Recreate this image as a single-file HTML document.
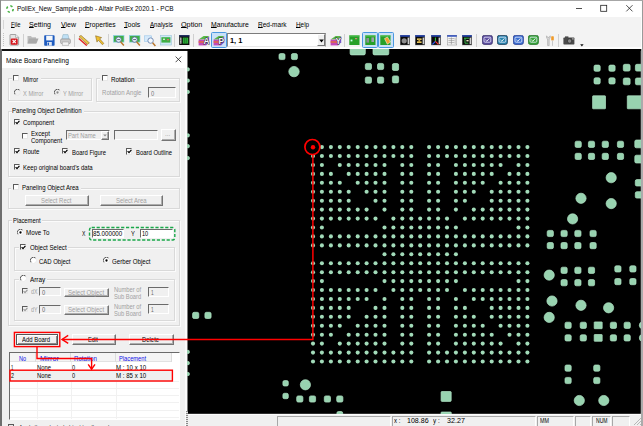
<!DOCTYPE html><html><head><meta charset="utf-8"><title>PollEx PCB</title><style>html,body{margin:0;padding:0}body{width:643px;height:426px;overflow:hidden;position:relative;background:#f0f0f0;font-family:"Liberation Sans",sans-serif;font-size:7.4px;-webkit-text-size-adjust:none}#w{position:absolute;left:0;top:0;width:643px;height:426px;overflow:hidden}#w div,#w svg,#w span{position:absolute;display:block}#w span.t{white-space:pre;line-height:1;transform-origin:0 50%}#w span.t u{position:static;display:inline;text-decoration-thickness:.55px;text-underline-offset:.2px}</style></head><body><div id="w">
<div style="left:0.0px;top:49.4px;width:187.4px;height:376.6px;background:#f0f0f0"></div>
<div style="left:0.0px;top:49.2px;width:643.0px;height:1.9px;background:#111"></div>
<div style="left:1.6px;top:51.1px;width:185.0px;height:17.2px;background:#fff"></div>
<span class="t" style="left:6.2px;top:57.05px;font-size:7.6px;color:#000;transform:scaleX(0.8649);">Make Board Paneling</span>
<svg style="left:174.6px;top:56.2px" width="7" height="7" viewBox="0 0 7 7"><path d="M.6 .6l5.6 5.6M6.2 .6L.6 6.2" stroke="#222" stroke-width=".8"/></svg>
<div style="left:185.1px;top:68.3px;width:2.3px;height:357.7px;background:#fbfbfb"></div>
<div style="left:0.0px;top:49.4px;width:1.6px;height:376.6px;background:#6e6e6e"></div>
<div style="left:8.1px;top:78.1px;width:83.8px;height:23.4px;border:1px solid #d9d9d9;box-shadow:inset 1px 1px 0 #fbfbfb, 1px 1px 0 #fbfbfb;box-sizing:border-box"></div>
<div style="left:11.5px;top:74.0px;width:29.0px;height:9.0px;background:#f0f0f0"></div>
<div style="left:13.2px;top:75.3px;width:6.2px;height:6.2px;background:#fff;border:1px solid #e8e8e8;border-top-color:#5a5a5a;border-left-color:#5a5a5a;box-sizing:border-box"></div>
<span class="t" style="left:23.0px;top:75.75px;font-size:7.4px;color:#000;transform:scaleX(0.7877);">Mirror</span>
<svg style="left:14.1px;top:88.6px" width="7" height="7" viewBox="0 0 7 7"><circle cx="3.5" cy="3.5" r="3.1" fill="#f0f0f0"/><path d="M1.2 5.5A3.1 3.1 0 0 1 5.7 1.2" stroke="#585858" stroke-width="1" fill="none"/><path d="M5.7 1.2A3.1 3.1 0 0 1 1.2 5.5" stroke="#e8e8e8" stroke-width=".9" fill="none"/></svg>
<span class="t" style="left:23.3px;top:89.75px;font-size:7.4px;color:#a0a0a0;transform:scaleX(0.7724);">X Mirror</span>
<svg style="left:54.1px;top:88.6px" width="7" height="7" viewBox="0 0 7 7"><circle cx="3.5" cy="3.5" r="3.1" fill="#f0f0f0"/><path d="M1.2 5.5A3.1 3.1 0 0 1 5.7 1.2" stroke="#585858" stroke-width="1" fill="none"/><path d="M5.7 1.2A3.1 3.1 0 0 1 1.2 5.5" stroke="#e8e8e8" stroke-width=".9" fill="none"/><circle cx="3.5" cy="3.5" r="1.15" fill="#8a8a8a"/></svg>
<span class="t" style="left:63.4px;top:89.75px;font-size:7.4px;color:#a0a0a0;transform:scaleX(0.7723);">Y Mirror</span>
<div style="left:96.2px;top:78.1px;width:83.8px;height:23.6px;border:1px solid #d9d9d9;box-shadow:inset 1px 1px 0 #fbfbfb, 1px 1px 0 #fbfbfb;box-sizing:border-box"></div>
<div style="left:100.0px;top:74.0px;width:37.0px;height:9.0px;background:#f0f0f0"></div>
<div style="left:101.5px;top:75.3px;width:6.2px;height:6.2px;background:#fff;border:1px solid #e8e8e8;border-top-color:#5a5a5a;border-left-color:#5a5a5a;box-sizing:border-box"></div>
<span class="t" style="left:110.5px;top:75.95px;font-size:7.4px;color:#000;transform:scaleX(0.8536);">Rotation</span>
<span class="t" style="left:102.1px;top:89.45px;font-size:7.4px;color:#a0a0a0;transform:scaleX(0.8216);">Rotation Angle</span>
<div style="left:148.3px;top:87.2px;width:28.0px;height:10.4px;background:#f0f0f0;border:1px solid #fff;border-top-color:#6a6a6a;border-left-color:#6a6a6a;box-sizing:border-box"></div>
<span class="t" style="left:151.0px;top:89.55px;font-size:7.4px;color:#7a7a7a;transform:scaleX(0.7758);">0</span>
<div style="left:8.1px;top:110.5px;width:172.2px;height:66.0px;border:1px solid #d9d9d9;box-shadow:inset 1px 1px 0 #fbfbfb, 1px 1px 0 #fbfbfb;box-sizing:border-box"></div>
<div style="left:11.5px;top:106.5px;width:72.5px;height:8.5px;background:#f0f0f0"></div>
<span class="t" style="left:12.4px;top:106.85px;font-size:7.4px;color:#000;transform:scaleX(0.8184);">Paneling Object Definition</span>
<div style="left:13.7px;top:118.8px;width:6.2px;height:6.2px;background:#fff;border:1px solid #e8e8e8;border-top-color:#5a5a5a;border-left-color:#5a5a5a;box-sizing:border-box"></div>
<svg style="left:14.7px;top:119.7px" width="5" height="5" viewBox="0 0 5 5"><path d="M.6 2.2l1.4 1.5L4.4 .8" stroke="#000" stroke-width="1.15" fill="none"/></svg>
<span class="t" style="left:23.3px;top:119.25px;font-size:7.4px;color:#000;transform:scaleX(0.8137);">Component</span>
<div style="left:21.7px;top:133.0px;width:6.2px;height:6.2px;background:#fff;border:1px solid #e8e8e8;border-top-color:#5a5a5a;border-left-color:#5a5a5a;box-sizing:border-box"></div>
<span class="t" style="left:31.1px;top:129.95px;font-size:7.4px;color:#000;transform:scaleX(0.8359);">Except</span>
<span class="t" style="left:31.1px;top:137.05px;font-size:7.4px;color:#000;transform:scaleX(0.8137);">Component</span>
<div style="left:66.1px;top:130.3px;width:43.8px;height:9.8px;background:#f0f0f0;border:1px solid #fff;border-top-color:#6a6a6a;border-left-color:#6a6a6a;box-sizing:border-box"></div>
<span class="t" style="left:67.9px;top:132.25px;font-size:7.4px;color:#a0a0a0;transform:scaleX(0.7841);">Part Name</span>
<div style="left:100.6px;top:131.0px;width:8.8px;height:8.6px;background:#f0f0f0;border:1px solid #fff;border-right-color:#747474;border-bottom-color:#747474;box-shadow:inset -1px -1px 0 #adadad;box-sizing:border-box"></div>
<svg style="left:103px;top:134px" width="4" height="3" viewBox="0 0 4 3"><path d="M.2 .4h3.6l-1.8 2.2z" fill="#8a8a8a"/></svg>
<div style="left:114.1px;top:130.3px;width:43.6px;height:9.5px;background:#f0f0f0;border:1px solid #fff;border-top-color:#6a6a6a;border-left-color:#6a6a6a;box-sizing:border-box"></div>
<div style="left:160.8px;top:128.8px;width:14.8px;height:12.5px;background:#f0f0f0;border:1px solid #fff;border-right-color:#747474;border-bottom-color:#747474;box-shadow:inset -1px -1px 0 #adadad;box-sizing:border-box"></div>
<span class="t" style="left:165.4px;top:130.15px;font-size:7.4px;color:#a0a0a0;transform:scaleX(0.8425);">...</span>
<div style="left:13.7px;top:148.2px;width:6.2px;height:6.2px;background:#fff;border:1px solid #e8e8e8;border-top-color:#5a5a5a;border-left-color:#5a5a5a;box-sizing:border-box"></div>
<svg style="left:14.7px;top:149.1px" width="5" height="5" viewBox="0 0 5 5"><path d="M.6 2.2l1.4 1.5L4.4 .8" stroke="#000" stroke-width="1.15" fill="none"/></svg>
<span class="t" style="left:23.3px;top:148.35px;font-size:7.4px;color:#000;transform:scaleX(0.8310);">Route</span>
<div style="left:62.2px;top:148.2px;width:6.2px;height:6.2px;background:#fff;border:1px solid #e8e8e8;border-top-color:#5a5a5a;border-left-color:#5a5a5a;box-sizing:border-box"></div>
<svg style="left:63.2px;top:149.1px" width="5" height="5" viewBox="0 0 5 5"><path d="M.6 2.2l1.4 1.5L4.4 .8" stroke="#000" stroke-width="1.15" fill="none"/></svg>
<span class="t" style="left:71.5px;top:148.55px;font-size:7.4px;color:#000;transform:scaleX(0.7980);">Board Figure</span>
<div style="left:126.2px;top:148.4px;width:6.2px;height:6.2px;background:#fff;border:1px solid #e8e8e8;border-top-color:#5a5a5a;border-left-color:#5a5a5a;box-sizing:border-box"></div>
<svg style="left:127.2px;top:149.3px" width="5" height="5" viewBox="0 0 5 5"><path d="M.6 2.2l1.4 1.5L4.4 .8" stroke="#000" stroke-width="1.15" fill="none"/></svg>
<span class="t" style="left:135.9px;top:148.75px;font-size:7.4px;color:#000;transform:scaleX(0.7986);">Board Outline</span>
<div style="left:13.7px;top:163.7px;width:6.2px;height:6.2px;background:#fff;border:1px solid #e8e8e8;border-top-color:#5a5a5a;border-left-color:#5a5a5a;box-sizing:border-box"></div>
<svg style="left:14.7px;top:164.6px" width="5" height="5" viewBox="0 0 5 5"><path d="M.6 2.2l1.4 1.5L4.4 .8" stroke="#000" stroke-width="1.15" fill="none"/></svg>
<span class="t" style="left:23.3px;top:164.05px;font-size:7.4px;color:#000;transform:scaleX(0.8137);">Keep original board's data</span>
<div style="left:8.1px;top:187.5px;width:172.2px;height:21.7px;border:1px solid #d9d9d9;box-shadow:inset 1px 1px 0 #fbfbfb, 1px 1px 0 #fbfbfb;box-sizing:border-box"></div>
<div style="left:11.0px;top:183.5px;width:69.5px;height:8.5px;background:#f0f0f0"></div>
<div style="left:12.6px;top:184.1px;width:6.2px;height:6.2px;background:#fff;border:1px solid #e8e8e8;border-top-color:#5a5a5a;border-left-color:#5a5a5a;box-sizing:border-box"></div>
<span class="t" style="left:21.8px;top:184.45px;font-size:7.4px;color:#000;transform:scaleX(0.8166);">Paneling Object Area</span>
<div style="left:24.9px;top:194.8px;width:64.1px;height:11.3px;background:#f0f0f0;border:1px solid #fff;border-right-color:#747474;border-bottom-color:#747474;box-shadow:inset -1px -1px 0 #adadad;box-sizing:border-box"></div>
<span class="t" style="left:41.2px;top:196.95px;font-size:7.4px;color:#a0a0a0;transform:scaleX(0.8017);">Select Rect</span>
<div style="left:99.6px;top:194.8px;width:63.9px;height:11.3px;background:#f0f0f0;border:1px solid #fff;border-right-color:#747474;border-bottom-color:#747474;box-shadow:inset -1px -1px 0 #adadad;box-sizing:border-box"></div>
<span class="t" style="left:115.7px;top:196.95px;font-size:7.4px;color:#a0a0a0;transform:scaleX(0.8093);">Select Area</span>
<div style="left:8.1px;top:220.2px;width:172.2px;height:105.5px;border:1px solid #d9d9d9;box-shadow:inset 1px 1px 0 #fbfbfb, 1px 1px 0 #fbfbfb;box-sizing:border-box"></div>
<div style="left:11.5px;top:216.5px;width:30.5px;height:8.5px;background:#f0f0f0"></div>
<span class="t" style="left:12.8px;top:217.35px;font-size:7.4px;color:#000;transform:scaleX(0.7903);">Placement</span>
<svg style="left:17.0px;top:228.8px" width="7" height="7" viewBox="0 0 7 7"><circle cx="3.5" cy="3.5" r="3.1" fill="#fff"/><path d="M1.2 5.5A3.1 3.1 0 0 1 5.7 1.2" stroke="#585858" stroke-width="1" fill="none"/><path d="M5.7 1.2A3.1 3.1 0 0 1 1.2 5.5" stroke="#e8e8e8" stroke-width=".9" fill="none"/><circle cx="3.5" cy="3.5" r="1.15" fill="#000"/></svg>
<span class="t" style="left:26.1px;top:229.35px;font-size:7.4px;color:#000;transform:scaleX(0.8418);">Move To</span>
<span class="t" style="left:82.4px;top:230.15px;font-size:7.4px;color:#000;transform:scaleX(0.6886);">X</span>
<span class="t" style="left:131.2px;top:230.15px;font-size:7.4px;color:#000;transform:scaleX(0.7899);">Y</span>
<div style="left:92.0px;top:229.1px;width:31.5px;height:9.1px;background:#fff;border:1px solid #fff;border-top-color:#6a6a6a;border-left-color:#6a6a6a;box-sizing:border-box"></div>
<span class="t" style="left:93.0px;top:230.35px;font-size:7.4px;color:#000;transform:scaleX(0.8358);">85.000000</span>
<div style="left:139.5px;top:229.1px;width:33.7px;height:9.1px;background:#fff;border:1px solid #fff;border-top-color:#6a6a6a;border-left-color:#6a6a6a;box-sizing:border-box"></div>
<span class="t" style="left:142.1px;top:230.35px;font-size:7.4px;color:#000;transform:scaleX(0.7529);">10</span>
<svg style="left:88px;top:226px" width="89" height="16" viewBox="88 226 89 16"><rect x="89.5" y="227.5" width="85.3" height="12.5" rx="2.2" fill="none" stroke="#1aa84a" stroke-width="1.4" stroke-dasharray="3.2 1.7"/></svg>
<div style="left:13.7px;top:246.8px;width:161.2px;height:24.1px;border:1px solid #d9d9d9;box-shadow:inset 1px 1px 0 #fbfbfb, 1px 1px 0 #fbfbfb;box-sizing:border-box"></div>
<div style="left:18.5px;top:242.8px;width:49.5px;height:8.7px;background:#f0f0f0"></div>
<div style="left:20.1px;top:243.8px;width:6.2px;height:6.2px;background:#fff;border:1px solid #e8e8e8;border-top-color:#5a5a5a;border-left-color:#5a5a5a;box-sizing:border-box"></div>
<svg style="left:21.1px;top:244.7px" width="5" height="5" viewBox="0 0 5 5"><path d="M.6 2.2l1.4 1.5L4.4 .8" stroke="#000" stroke-width="1.15" fill="none"/></svg>
<span class="t" style="left:29.5px;top:244.05px;font-size:7.4px;color:#000;transform:scaleX(0.8324);">Object Select</span>
<svg style="left:29.5px;top:256.8px" width="7" height="7" viewBox="0 0 7 7"><circle cx="3.5" cy="3.5" r="3.1" fill="#fff"/><path d="M1.2 5.5A3.1 3.1 0 0 1 5.7 1.2" stroke="#585858" stroke-width="1" fill="none"/><path d="M5.7 1.2A3.1 3.1 0 0 1 1.2 5.5" stroke="#e8e8e8" stroke-width=".9" fill="none"/></svg>
<span class="t" style="left:38.9px;top:258.05px;font-size:7.4px;color:#000;transform:scaleX(0.8045);">CAD Object</span>
<svg style="left:103.1px;top:256.8px" width="7" height="7" viewBox="0 0 7 7"><circle cx="3.5" cy="3.5" r="3.1" fill="#fff"/><path d="M1.2 5.5A3.1 3.1 0 0 1 5.7 1.2" stroke="#585858" stroke-width="1" fill="none"/><path d="M5.7 1.2A3.1 3.1 0 0 1 1.2 5.5" stroke="#e8e8e8" stroke-width=".9" fill="none"/><circle cx="3.5" cy="3.5" r="1.15" fill="#000"/></svg>
<span class="t" style="left:112.2px;top:258.05px;font-size:7.4px;color:#000;transform:scaleX(0.8294);">Gerber Object</span>
<div style="left:13.7px;top:278.7px;width:161.2px;height:42.7px;border:1px solid #d9d9d9;box-shadow:inset 1px 1px 0 #fbfbfb, 1px 1px 0 #fbfbfb;box-sizing:border-box"></div>
<div style="left:18.5px;top:274.5px;width:28.5px;height:9.0px;background:#f0f0f0"></div>
<svg style="left:20.4px;top:274.5px" width="7" height="7" viewBox="0 0 7 7"><circle cx="3.5" cy="3.5" r="3.1" fill="#fff"/><path d="M1.2 5.5A3.1 3.1 0 0 1 5.7 1.2" stroke="#585858" stroke-width="1" fill="none"/><path d="M5.7 1.2A3.1 3.1 0 0 1 1.2 5.5" stroke="#e8e8e8" stroke-width=".9" fill="none"/></svg>
<span class="t" style="left:29.9px;top:275.75px;font-size:7.4px;color:#000;transform:scaleX(0.8601);">Array</span>
<div style="left:21.5px;top:287.6px;width:6.2px;height:6.2px;background:#f0f0f0;border:1px solid #e8e8e8;border-top-color:#5a5a5a;border-left-color:#5a5a5a;box-sizing:border-box"></div>
<svg style="left:22.5px;top:288.5px" width="5" height="5" viewBox="0 0 5 5"><path d="M.6 2.2l1.4 1.5L4.4 .8" stroke="#9a9a9a" stroke-width="1.15" fill="none"/></svg>
<span class="t" style="left:31.1px;top:288.35px;font-size:7.4px;color:#a0a0a0;transform:scaleX(0.7185);">dX</span>
<div style="left:38.9px;top:286.7px;width:21.9px;height:9.8px;background:#f0f0f0;border:1px solid #fff;border-top-color:#6a6a6a;border-left-color:#6a6a6a;box-sizing:border-box"></div>
<span class="t" style="left:41.5px;top:288.55px;font-size:7.4px;color:#6a6a6a;transform:scaleX(0.7758);">0</span>
<div style="left:64.1px;top:287.6px;width:44.7px;height:9.8px;background:#f0f0f0;border:1px solid #fff;border-right-color:#747474;border-bottom-color:#747474;box-shadow:inset -1px -1px 0 #adadad;box-sizing:border-box"></div>
<span class="t" style="left:67.9px;top:288.65px;font-size:7.4px;color:#a0a0a0;transform:scaleX(0.8210);">Select Object</span>
<span class="t" style="left:114.1px;top:285.85px;font-size:7.4px;color:#a0a0a0;transform:scaleX(0.7880);">Number of</span>
<span class="t" style="left:114.1px;top:292.85px;font-size:7.4px;color:#a0a0a0;transform:scaleX(0.7785);">Sub Board</span>
<div style="left:148.3px;top:287.2px;width:20.3px;height:9.8px;background:#f0f0f0;border:1px solid #fff;border-top-color:#6a6a6a;border-left-color:#6a6a6a;box-sizing:border-box"></div>
<span class="t" style="left:151.3px;top:288.95px;font-size:7.4px;color:#6a6a6a;transform:scaleX(0.6545);">1</span>
<div style="left:21.5px;top:305.8px;width:6.2px;height:6.2px;background:#f0f0f0;border:1px solid #e8e8e8;border-top-color:#5a5a5a;border-left-color:#5a5a5a;box-sizing:border-box"></div>
<svg style="left:22.5px;top:306.7px" width="5" height="5" viewBox="0 0 5 5"><path d="M.6 2.2l1.4 1.5L4.4 .8" stroke="#9a9a9a" stroke-width="1.15" fill="none"/></svg>
<span class="t" style="left:31.1px;top:306.15px;font-size:7.4px;color:#a0a0a0;transform:scaleX(0.7185);">dY</span>
<div style="left:38.9px;top:304.5px;width:21.9px;height:9.8px;background:#f0f0f0;border:1px solid #fff;border-top-color:#6a6a6a;border-left-color:#6a6a6a;box-sizing:border-box"></div>
<span class="t" style="left:41.5px;top:306.35px;font-size:7.4px;color:#6a6a6a;transform:scaleX(0.7758);">0</span>
<div style="left:64.1px;top:305.4px;width:44.7px;height:9.8px;background:#f0f0f0;border:1px solid #fff;border-right-color:#747474;border-bottom-color:#747474;box-shadow:inset -1px -1px 0 #adadad;box-sizing:border-box"></div>
<span class="t" style="left:67.9px;top:306.45px;font-size:7.4px;color:#a0a0a0;transform:scaleX(0.8210);">Select Object</span>
<span class="t" style="left:114.1px;top:303.05px;font-size:7.4px;color:#a0a0a0;transform:scaleX(0.7880);">Number of</span>
<span class="t" style="left:114.1px;top:310.05px;font-size:7.4px;color:#a0a0a0;transform:scaleX(0.7785);">Sub Board</span>
<div style="left:148.3px;top:304.4px;width:20.3px;height:9.5px;background:#f0f0f0;border:1px solid #fff;border-top-color:#6a6a6a;border-left-color:#6a6a6a;box-sizing:border-box"></div>
<span class="t" style="left:151.3px;top:305.95px;font-size:7.4px;color:#6a6a6a;transform:scaleX(0.6545);">1</span>
<div style="left:15.6px;top:333.7px;width:42.3px;height:10.9px;background:#f0f0f0;border:1px solid #555;box-shadow:inset 1px 1px 0 #fff, inset -1px -1px 0 #8a8a8a;box-sizing:border-box"></div>
<span class="t" style="left:22.1px;top:335.95px;font-size:7.4px;color:#000;transform:scaleX(0.8014);">Add Board</span>
<div style="left:71.9px;top:333.7px;width:44.5px;height:10.9px;background:#f0f0f0;border:1px solid #fff;border-right-color:#747474;border-bottom-color:#747474;box-shadow:inset -1px -1px 0 #adadad;box-sizing:border-box"></div>
<span class="t" style="left:88.3px;top:335.95px;font-size:7.4px;color:#000;transform:scaleX(0.7686);">Edit</span>
<div style="left:128.6px;top:333.7px;width:45.4px;height:10.9px;background:#f0f0f0;border:1px solid #fff;border-right-color:#747474;border-bottom-color:#747474;box-shadow:inset -1px -1px 0 #adadad;box-sizing:border-box"></div>
<span class="t" style="left:142.1px;top:335.95px;font-size:7.4px;color:#000;transform:scaleX(0.8000);">Delete</span>
<div style="left:8.6px;top:352.3px;width:171.4px;height:67.3px;background:#fff;border:1px solid #fff;border-top-color:#6a6a6a;border-left-color:#6a6a6a;box-sizing:border-box"></div>
<div style="left:9.6px;top:353.3px;width:162.0px;height:8.4px;background:#f4f4f4;border-bottom:1px solid #e2e2e2;box-sizing:border-box"></div>
<div style="left:35.4px;top:353.3px;width:0.8px;height:8.4px;background:#dcdcdc"></div>
<div style="left:70.1px;top:353.3px;width:0.8px;height:8.4px;background:#dcdcdc"></div>
<div style="left:115.3px;top:353.3px;width:0.8px;height:8.4px;background:#dcdcdc"></div>
<div style="left:171.2px;top:353.3px;width:0.8px;height:8.4px;background:#dcdcdc"></div>
<div style="left:36.9px;top:362.0px;width:0.8px;height:56.6px;background:#f1f1f1"></div>
<div style="left:71.1px;top:362.0px;width:0.8px;height:56.6px;background:#f1f1f1"></div>
<div style="left:115.8px;top:362.0px;width:0.8px;height:56.6px;background:#f1f1f1"></div>
<div style="left:9.6px;top:380.6px;width:169.4px;height:0.8px;background:#f1f1f1"></div>
<div style="left:9.6px;top:387.8px;width:169.4px;height:0.8px;background:#f1f1f1"></div>
<div style="left:9.6px;top:395.0px;width:169.4px;height:0.8px;background:#f1f1f1"></div>
<div style="left:9.6px;top:402.2px;width:169.4px;height:0.8px;background:#f1f1f1"></div>
<div style="left:9.6px;top:409.5px;width:169.4px;height:0.8px;background:#f1f1f1"></div>
<div style="left:9.6px;top:416.7px;width:169.4px;height:0.8px;background:#f1f1f1"></div>
<div style="left:9.6px;top:370.3px;width:162.0px;height:10.7px;background:#efefef"></div>
<span class="t" style="left:19.0px;top:354.95px;font-size:7.4px;color:#1010e8;transform:scaleX(0.7511);">No</span>
<span class="t" style="left:40.1px;top:354.95px;font-size:7.4px;color:#1010e8;transform:scaleX(0.9794);">Mirror</span>
<span class="t" style="left:73.9px;top:354.95px;font-size:7.4px;color:#1010e8;transform:scaleX(0.8281);">Rotation</span>
<span class="t" style="left:119.2px;top:354.95px;font-size:7.4px;color:#1010e8;transform:scaleX(0.7760);">Placement</span>
<span class="t" style="left:10.9px;top:364.25px;font-size:7.4px;color:#000;transform:scaleX(0.5576);">1</span>
<span class="t" style="left:37.3px;top:364.25px;font-size:7.4px;color:#000;transform:scaleX(0.7922);">None</span>
<span class="t" style="left:71.5px;top:364.25px;font-size:7.4px;color:#000;transform:scaleX(0.7515);">0</span>
<span class="t" style="left:116.1px;top:364.25px;font-size:7.4px;color:#000;transform:scaleX(0.8260);">M : 10 x 10</span>
<span class="t" style="left:10.6px;top:372.25px;font-size:7.4px;color:#000;transform:scaleX(0.7273);">2</span>
<span class="t" style="left:37.3px;top:372.25px;font-size:7.4px;color:#000;transform:scaleX(0.7922);">None</span>
<span class="t" style="left:71.5px;top:372.25px;font-size:7.4px;color:#000;transform:scaleX(0.7515);">0</span>
<span class="t" style="left:116.1px;top:372.25px;font-size:7.4px;color:#000;transform:scaleX(0.8260);">M : 85 x 10</span>
<div style="left:8.0px;top:424.0px;width:6.2px;height:7.0px;background:#e6e6e6;border:1px solid #5a5a5a;box-sizing:border-box"></div>
<span class="t" style="left:19.0px;top:424.35px;font-size:7.4px;color:#333;transform:scaleX(0.7520);">Apply the selected object to all panels</span>
<div style="left:0.0px;top:0.0px;width:643.0px;height:17.0px;background:#fff"></div>
<svg style="left:5px;top:3.5px" width="10" height="10" viewBox="0 0 10 10"><circle cx="5" cy="5" r="3.2" fill="none" stroke="#48b044" stroke-width="1.6" stroke-dasharray="2.3 2.7"/></svg>
<span class="t" style="left:17.0px;top:4.90px;font-size:7.4px;color:#000;transform:scaleX(0.8703);">PollEx_New_Sample.pdbb - Altair PollEx 2020.1 - PCB</span>
<svg style="left:570px;top:0px" width="70" height="18" viewBox="0 0 70 18"><path d="M6 8.5h6" stroke="#222" stroke-width="0.8" fill="none"/><rect x="30.7" y="5.3" width="6" height="6" stroke="#222" stroke-width="0.8" fill="none"/><path d="M56.3 5.2l6.2 6.2M62.5 5.2l-6.2 6.2" stroke="#222" stroke-width="0.8" fill="none"/></svg>
<div style="left:0.0px;top:17.0px;width:643.0px;height:13.0px;background:#f3f3f3"></div>
<span class="t" style="left:10.5px;top:20.70px;font-size:7.4px;color:#000;transform:scaleX(0.7969);"><u>F</u>ile</span>
<span class="t" style="left:29.0px;top:20.70px;font-size:7.4px;color:#000;transform:scaleX(0.9552);"><u>S</u>etting</span>
<span class="t" style="left:60.5px;top:20.70px;font-size:7.4px;color:#000;transform:scaleX(0.9440);"><u>V</u>iew</span>
<span class="t" style="left:84.5px;top:20.70px;font-size:7.4px;color:#000;transform:scaleX(0.9079);"><u>P</u>roperties</span>
<span class="t" style="left:124.4px;top:20.70px;font-size:7.4px;color:#000;transform:scaleX(0.9441);"><u>T</u>ools</span>
<span class="t" style="left:149.5px;top:20.70px;font-size:7.4px;color:#000;transform:scaleX(0.8281);"><u>A</u>nalysis</span>
<span class="t" style="left:181.2px;top:20.70px;font-size:7.4px;color:#000;transform:scaleX(0.9779);"><u>O</u>ption</span>
<span class="t" style="left:210.9px;top:20.70px;font-size:7.4px;color:#000;transform:scaleX(0.9219);"><u>M</u>anufacture</span>
<span class="t" style="left:257.9px;top:20.70px;font-size:7.4px;color:#000;transform:scaleX(0.8813);"><u>R</u>ed-mark</span>
<span class="t" style="left:295.5px;top:20.70px;font-size:7.4px;color:#000;transform:scaleX(0.8608);"><u>H</u>elp</span>
<div style="left:0.0px;top:30.0px;width:643.0px;height:19.4px;background:#f3f3f3"></div>
<div style="left:0.0px;top:47.2px;width:643.0px;height:2.2px;background:#fdfdfd"></div>
<div style="left:3.4px;top:19.5px;width:0.8px;height:9.0px;background:#d6d6d6"></div>
<div style="left:2.5px;top:33.0px;width:1.0px;height:14.0px;background:repeating-linear-gradient(#c2c2c2 0 1px,transparent 1px 2px)"></div>
<div style="left:22.7px;top:33.5px;width:0.8px;height:13.0px;background:#d0d0d0"></div>
<div style="left:73.5px;top:33.5px;width:0.8px;height:13.0px;background:#d0d0d0"></div>
<div style="left:108.0px;top:33.5px;width:0.8px;height:13.0px;background:#d0d0d0"></div>
<div style="left:174.4px;top:33.5px;width:0.8px;height:13.0px;background:#d0d0d0"></div>
<div style="left:193.2px;top:33.5px;width:0.8px;height:13.0px;background:#d0d0d0"></div>
<div style="left:344.3px;top:33.5px;width:0.8px;height:13.0px;background:#d0d0d0"></div>
<div style="left:475.9px;top:33.5px;width:0.8px;height:13.0px;background:#d0d0d0"></div>
<div style="left:558.0px;top:33.5px;width:0.8px;height:13.0px;background:#d0d0d0"></div>
<svg style="left:9px;top:34px" width="11" height="12" viewBox="0 0 11 12"><path d="M1.6 .5h5.2l2.8 2.8v7.2q0 .6-.6.6h-7.4q-.6 0-.6-.6v-9.4q0-.6.6-.6z" fill="#e4e4e4" stroke="#8f8f8f" stroke-width=".8"/><path d="M6.6 .6v2.8h2.8" fill="#f8f8f8" stroke="#8f8f8f" stroke-width=".6"/><rect x="1.7" y="4.5" width="7" height="6.2" rx="1.2" fill="#d6181e"/><path d="M3.6 6l3.2 3.2M6.8 6L3.6 9.2" stroke="#fff" stroke-width="1.1"/></svg>
<svg style="left:27px;top:34px" width="12" height="11" viewBox="0 0 12 11"><path d="M.5 2h3.5l1 1.2h4v6.3h-8.5z" fill="#bdbdbd"/><path d="M2.2 4.6h9.3l-2 5h-9z" fill="#a9a9a9"/></svg>
<svg style="left:44px;top:34.5px" width="11" height="11" viewBox="0 0 11 11"><rect x=".2" y=".3" width="10.4" height="10.4" rx=".8" fill="#1e5bbf"/><rect x="2.2" y=".8" width="6.4" height="4.6" fill="#f4f7fb"/><rect x="3" y="7" width="4.8" height="3.7" fill="#dfe6f2"/><rect x="3.6" y="7.6" width="1.4" height="2.6" fill="#1e5bbf"/></svg>
<svg style="left:59.5px;top:34px" width="11" height="12" viewBox="0 0 11 12"><path d="M3 .6h5l1 4.4h-7z" fill="#bfe0f5" stroke="#8ab" stroke-width=".5"/><rect x=".6" y="5" width="9.8" height="4.6" rx="1.2" fill="#c9c9c9" stroke="#8c8c8c" stroke-width=".6"/><rect x="2.2" y="8" width="6.6" height="3.2" fill="#f2f2f2" stroke="#999" stroke-width=".5"/></svg>
<svg style="left:78px;top:35px" width="12" height="11" viewBox="0 0 12 11"><path d="M1 1.6l2-1.2 8.4 7.4-2 1.6z" fill="#e8c24a" stroke="#8a6a20" stroke-width=".6"/><path d="M.8 3.6l8 7" stroke="#e02020" stroke-width="1.3"/></svg>
<svg style="left:95px;top:35px" width="10" height="10" viewBox="0 0 10 10"><path d="M.6 .8l6 1.8-2 1.2 4.2 4.6-1.4 1.3-4.2-4.6-1.2 2z" fill="#f0c030" stroke="#8a6a20" stroke-width=".6"/></svg>
<svg style="left:112.5px;top:34.5px" width="12" height="12" viewBox="0 0 12 12"><rect x=".5" y=".5" width="10.5" height="6.6" fill="#3fb045" stroke="#8fd0e8" stroke-width=".7"/><circle cx="5.6" cy="4.6" r="2.7" fill="#e6f1fa" stroke="#5a6f9a" stroke-width=".9"/><path d="M7.6 6.8l3.3 3.8" stroke="#b9772e" stroke-width="1.5"/><path d="M4.2 4.6h2.8" stroke="#345" stroke-width=".8"/></svg>
<svg style="left:128.8px;top:34.5px" width="12" height="12" viewBox="0 0 12 12"><rect x=".5" y=".5" width="10.5" height="6.6" fill="#3fb045" stroke="#8fd0e8" stroke-width=".7"/><circle cx="5.6" cy="4.6" r="2.7" fill="#e6f1fa" stroke="#5a6f9a" stroke-width=".9"/><path d="M7.6 6.8l3.3 3.8" stroke="#b9772e" stroke-width="1.5"/><path d="M4.2 4.6h2.8" stroke="#345" stroke-width=".8"/></svg>
<svg style="left:144.2px;top:34.5px" width="12" height="12" viewBox="0 0 12 12"><rect x=".5" y=".8" width="7" height="5.6" fill="#d5e9fa" stroke="#9cc6ea" stroke-width=".6"/><circle cx="6.6" cy="5.6" r="2.7" fill="#f4f9fd" stroke="#6c86b0" stroke-width=".9"/><path d="M8.6 7.8l2.8 3.2" stroke="#b9772e" stroke-width="1.5"/></svg>
<svg style="left:159.5px;top:35px" width="12" height="11" viewBox="0 0 12 11"><rect x=".4" y=".4" width="11" height="9.6" fill="#cfe8f6" stroke="#9cc6da" stroke-width=".6"/><rect x="1.4" y="2.2" width="9" height="5.4" fill="#3fb045"/><rect x="3" y="3.6" width="2" height="1.4" fill="#d0e8d0"/><rect x="7" y="4" width="2" height="1.4" fill="#d87070"/></svg>
<svg style="left:179.2px;top:34.8px" width="11" height="11" viewBox="0 0 11 11"><rect x=".2" y=".2" width="10.2" height="9.8" fill="#0c0c0c"/><rect x=".2" y=".2" width="10.2" height="1.3" fill="#1f2f6a"/><rect x="3.8" y="2.6" width="5.4" height="6" fill="#2fb03a"/><path d="M5.4 2.6v6M7.2 2.6v6" stroke="#0c5a18" stroke-width=".6"/><rect x="1" y="2.6" width="1.5" height="6" fill="#d8d8d8"/><path d="M1 4h1.5M1 5.6h1.5M1 7.2h1.5" stroke="#333" stroke-width=".5"/></svg>
<svg style="left:198px;top:34.6px" width="12" height="11" viewBox="0 0 12 11"><path d="M.6 4.6l5-3.6h5.6l-3.2 3.2z" fill="#58b848"/><path d="M.6 4.6h7.4v5.8h-7.4z" fill="#c04ab8"/><path d="M.6 6.2h7.4v1.6h-7.4z" fill="#e06a4a"/><path d="M8 4.4l3.2-3.2v6l-3.2 3.2z" fill="#7a58c8"/><text x="5.4" y="9.2" font-family="Liberation Sans,sans-serif" font-size="8.4" font-weight="bold" fill="#f4f8ff" stroke="#2a2a2a" stroke-width="1" paint-order="stroke" stroke-linejoin="round">A</text></svg>
<div style="left:210.8px;top:31.8px;width:16.2px;height:15.8px;background:#cae1f8;border:1px solid #4a98e0;border-radius:1.5px;box-sizing:border-box"></div>
<svg style="left:213.2px;top:34.6px" width="12" height="11" viewBox="0 0 12 11"><path d="M.6 4.6l5-3.6h5.6l-3.2 3.2z" fill="#58b848"/><path d="M.6 4.6h7.4v5.8h-7.4z" fill="#c04ab8"/><path d="M.6 6.2h7.4v1.6h-7.4z" fill="#e06a4a"/><path d="M8 4.4l3.2-3.2v6l-3.2 3.2z" fill="#7a58c8"/><text x="5.4" y="9.2" font-family="Liberation Sans,sans-serif" font-size="8.4" font-weight="bold" fill="#f4f8ff" stroke="#2a2a2a" stroke-width="1" paint-order="stroke" stroke-linejoin="round">P</text></svg>
<div style="left:227.0px;top:33.0px;width:99.0px;height:14.2px;background:#fff;border:1px solid #a0a0a0;border-top-color:#7c7c7c;border-left-color:#8c8c8c;border-bottom-color:#e8e8e8;box-sizing:border-box"></div>
<div style="left:317.0px;top:34.2px;width:8.2px;height:12.0px;background:#f0f0f0;border:1px solid #fff;border-right-color:#777;border-bottom-color:#777;box-sizing:border-box"></div>
<svg style="left:318.6px;top:38.6px" width="5" height="4" viewBox="0 0 5 4"><path d="M.2 .6h4.6l-2.3 2.8z" fill="#000"/></svg>
<span class="t" style="left:229.5px;top:36.60px;font-size:7.4px;color:#000;font-weight:bold;transform:scaleX(0.9977);">1, 1</span>
<svg style="left:330px;top:34.6px" width="12" height="11" viewBox="0 0 12 11"><path d="M.6 4.6l5-3.6h5.6l-3.2 3.2z" fill="#58b848"/><path d="M.6 4.6h7.4v5.8h-7.4z" fill="#c04ab8"/><path d="M.6 6.2h7.4v1.6h-7.4z" fill="#e06a4a"/><path d="M8 4.4l3.2-3.2v6l-3.2 3.2z" fill="#7a58c8"/><text x="5.4" y="9.2" font-family="Liberation Sans,sans-serif" font-size="8.4" font-weight="bold" fill="#f4f8ff" stroke="#2a2a2a" stroke-width="1" paint-order="stroke" stroke-linejoin="round">Y</text></svg>
<svg style="left:349px;top:34.6px" width="11" height="11" viewBox="0 0 11 11"><rect x=".3" y=".4" width="10.2" height="9.6" fill="#26a028"/><rect x=".3" y=".4" width="10.2" height="1.1" fill="#5cc45a"/><rect x="1.6" y="4.6" width="1.8" height="1.8" fill="#cfe"/><rect x="6" y="3.2" width="2.2" height="1" fill="#e88"/></svg>
<div style="left:362.3px;top:31.8px;width:15.6px;height:15.8px;background:#cae1f8;border:1px solid #4a98e0;border-radius:1.5px;box-sizing:border-box"></div>
<div style="left:377.5px;top:31.8px;width:16.0px;height:15.8px;background:#cae1f8;border:1px solid #4a98e0;border-radius:1.5px;box-sizing:border-box"></div>
<svg style="left:364.8px;top:34.6px" width="11" height="11" viewBox="0 0 11 11"><rect x=".3" y=".4" width="10.2" height="9.6" fill="#26a028"/><rect x=".3" y=".4" width="10.2" height="1.1" fill="#5cc45a"/><rect x="1.4" y="3" width="2.6" height="4.6" fill="#8a8f95"/><rect x="6.4" y="2.4" width="2.6" height="4.6" fill="#9aa0a8"/></svg>
<svg style="left:380.3px;top:34.6px" width="11" height="11" viewBox="0 0 11 11"><rect x=".3" y=".4" width="10.2" height="9.6" fill="#26a028"/><rect x=".3" y=".4" width="10.2" height="1.1" fill="#5cc45a"/><path d="M4.5 3.6l3-1.6 3 5-3.2 2.2z" fill="#f0a030" stroke="#fff" stroke-width=".5"/></svg>
<svg style="left:399.6px;top:35.2px" width="11" height="11" viewBox="0 0 11 11"><rect x=".2" y=".2" width="9.6" height="9.8" fill="#0a0a0a" stroke="#777" stroke-width=".4"/><rect x=".2" y=".2" width="9.6" height="1.5" fill="#2646b8"/><rect x="7.6" y="2.6" width="1.6" height="6.6" fill="#cfcfcf"/><circle cx="4.2" cy="5.8" r="2.6" fill="#8d8d8d"/></svg>
<svg style="left:415.3px;top:35.2px" width="11" height="11" viewBox="0 0 11 11"><rect x=".2" y=".2" width="9.6" height="9.8" fill="#0a0a0a" stroke="#777" stroke-width=".4"/><rect x=".2" y=".2" width="9.6" height="1.5" fill="#2646b8"/><rect x="7.6" y="2.6" width="1.6" height="6.6" fill="#cfcfcf"/><rect x="2" y="3.4" width="4.6" height="1.6" fill="#e8c860"/><rect x="2" y="6.4" width="4.6" height="1.6" fill="#e8c860"/><rect x="3.4" y="4" width="1.8" height="3.4" fill="#c8a040"/></svg>
<svg style="left:430.7px;top:35.2px" width="11" height="11" viewBox="0 0 11 11"><rect x=".2" y=".2" width="9.6" height="9.8" fill="#0a0a0a" stroke="#777" stroke-width=".4"/><rect x=".2" y=".2" width="9.6" height="1.5" fill="#2646b8"/><rect x="7.6" y="2.6" width="1.6" height="6.6" fill="#cfcfcf"/><path d="M4.4 2.6v4" stroke="#30d040" stroke-width="1"/><path d="M4.4 6.4l-3 3" stroke="#3060ff" stroke-width="1.1"/><path d="M4.4 6.4l3 3" stroke="#ff3030" stroke-width="1.1"/></svg>
<svg style="left:446.5px;top:35.2px" width="11" height="11" viewBox="0 0 11 11"><rect x=".2" y=".2" width="9.6" height="9.8" fill="#f6f6f6" stroke="#777" stroke-width=".4"/><rect x=".2" y=".2" width="9.6" height="1.5" fill="#2646b8"/><rect x="7.6" y="2.6" width="1.6" height="6.6" fill="#cfcfcf"/><path d="M1.4 3.6h6M1.4 5.6h6M1.4 7.6h6M4.4 2.4v7" stroke="#888" stroke-width=".6"/></svg>
<svg style="left:462px;top:35.2px" width="11" height="11" viewBox="0 0 11 11"><rect x=".2" y=".2" width="9.6" height="9.8" fill="#0a0a0a" stroke="#777" stroke-width=".4"/><rect x=".2" y=".2" width="9.6" height="1.5" fill="#2646b8"/><rect x="7.6" y="2.6" width="1.6" height="6.6" fill="#cfcfcf"/><path d="M2 3.2h5M3 3.2v5h3.4" stroke="#40c850" stroke-width=".9" fill="none"/><rect x="4.4" y="5" width="2.2" height="1.4" fill="#e8e8c0"/></svg>
<svg style="left:482px;top:35.4px" width="11" height="10" viewBox="0 0 11 10"><rect x=".4" y=".4" width="10" height="9" rx="1.8" fill="#5e4fa0" stroke="#37306a" stroke-width=".8"/><rect x="2" y="2.2" width="6.8" height="5" rx="1" fill="none" stroke="#eef" stroke-width=".8"/><path d="M3.4 4.8l1.4 1.4 2.6-2.8" stroke="#fff" stroke-width=".9" fill="none"/></svg>
<svg style="left:497px;top:35.4px" width="11" height="10" viewBox="0 0 11 10"><rect x=".4" y=".4" width="10" height="9" rx="1.8" fill="#2a86b0" stroke="#17324f" stroke-width=".8"/><rect x="2" y="2.2" width="6.8" height="5" rx="1" fill="none" stroke="#eef" stroke-width=".8"/><path d="M3.4 4.8l1.4 1.4 2.6-2.8" stroke="#fff" stroke-width=".9" fill="none"/></svg>
<svg style="left:512.5px;top:35.4px" width="11" height="10" viewBox="0 0 11 10"><rect x=".4" y=".4" width="10" height="9" rx="1.8" fill="#3a6fd0" stroke="#273a90" stroke-width=".8"/><rect x="2" y="2.2" width="6.8" height="5" rx="1" fill="none" stroke="#eef" stroke-width=".8"/><path d="M3.4 4.8l1.4 1.4 2.6-2.8" stroke="#fff" stroke-width=".9" fill="none"/></svg>
<svg style="left:527.8px;top:35.4px" width="11" height="10" viewBox="0 0 11 10"><rect x=".4" y=".4" width="10" height="9" rx="1.8" fill="#38a63c" stroke="#236f28" stroke-width=".8"/><rect x="2" y="2.2" width="6.8" height="5" rx="1" fill="none" stroke="#eef" stroke-width=".8"/><path d="M3.4 4.8l1.4 1.4 2.6-2.8" stroke="#fff" stroke-width=".9" fill="none"/></svg>
<svg style="left:544px;top:34.5px" width="11" height="12" viewBox="0 0 11 12"><path d="M2.6 .8v2.4l1 .8v6.6h1.6v-6.6l1-.8v-2.4l-1.1 1.6h-1.4z" fill="#d4d4d4" stroke="#9a9a9a" stroke-width=".5"/><rect x="7.2" y="1.2" width="2.6" height="4.2" rx=".6" fill="#f09a28"/><rect x="8" y="5.4" width="1" height="5.4" fill="#c8c8c8"/></svg>
<svg style="left:562.5px;top:36px" width="12" height="9" viewBox="0 0 12 9"><rect x=".4" y="1.6" width="11" height="6.8" rx=".6" fill="#4a4a4a"/><rect x="2" y=".4" width="3.4" height="1.6" fill="#4a4a4a"/><circle cx="6.6" cy="5" r="2.2" fill="#8a8a8a" stroke="#222" stroke-width=".6"/><rect x="9.2" y="2.4" width="1.4" height="1" fill="#ddd"/></svg>
<svg style="left:580.2px;top:44px" width="4" height="3" viewBox="0 0 4 3"><path d="M.2 .3h3.4l-1.7 2.2z" fill="#111"/></svg>
<svg style="left:187px;top:49px" width="454" height="365" viewBox="187 49 454 365"><rect x="187.5" y="49" width="453.3" height="364.8" fill="#000"/><g fill="#a2dbb9" transform="translate(0 .4)"><circle cx="321.9" cy="146.7" r="2.05"/><circle cx="330.9" cy="146.7" r="2.05"/><circle cx="339.8" cy="146.7" r="2.05"/><circle cx="348.7" cy="146.7" r="2.05"/><circle cx="357.7" cy="146.7" r="2.05"/><circle cx="366.6" cy="146.7" r="2.05"/><circle cx="375.5" cy="146.7" r="2.05"/><circle cx="384.5" cy="146.7" r="2.05"/><circle cx="393.4" cy="146.7" r="2.05"/><circle cx="402.3" cy="146.7" r="2.05"/><circle cx="411.3" cy="146.7" r="2.05"/><circle cx="429.1" cy="146.7" r="2.05"/><circle cx="438.1" cy="146.7" r="2.05"/><circle cx="447.0" cy="146.7" r="2.05"/><circle cx="455.9" cy="146.7" r="2.05"/><circle cx="464.9" cy="146.7" r="2.05"/><circle cx="473.8" cy="146.7" r="2.05"/><circle cx="482.7" cy="146.7" r="2.05"/><circle cx="491.7" cy="146.7" r="2.05"/><circle cx="500.6" cy="146.7" r="2.05"/><circle cx="509.5" cy="146.7" r="2.05"/><circle cx="518.5" cy="146.7" r="2.05"/><circle cx="527.4" cy="146.7" r="2.05"/><circle cx="313.0" cy="155.6" r="2.05"/><circle cx="321.9" cy="155.6" r="2.05"/><circle cx="330.9" cy="155.6" r="2.05"/><circle cx="339.8" cy="155.6" r="2.05"/><circle cx="348.7" cy="155.6" r="2.05"/><circle cx="357.7" cy="155.6" r="2.05"/><circle cx="366.6" cy="155.6" r="2.05"/><circle cx="375.5" cy="155.6" r="2.05"/><circle cx="384.5" cy="155.6" r="2.05"/><circle cx="393.4" cy="155.6" r="2.05"/><circle cx="402.3" cy="155.6" r="2.05"/><circle cx="411.3" cy="155.6" r="2.05"/><circle cx="429.1" cy="155.6" r="2.05"/><circle cx="438.1" cy="155.6" r="2.05"/><circle cx="447.0" cy="155.6" r="2.05"/><circle cx="455.9" cy="155.6" r="2.05"/><circle cx="464.9" cy="155.6" r="2.05"/><circle cx="473.8" cy="155.6" r="2.05"/><circle cx="482.7" cy="155.6" r="2.05"/><circle cx="491.7" cy="155.6" r="2.05"/><circle cx="500.6" cy="155.6" r="2.05"/><circle cx="509.5" cy="155.6" r="2.05"/><circle cx="518.5" cy="155.6" r="2.05"/><circle cx="527.4" cy="155.6" r="2.05"/><circle cx="313.0" cy="164.6" r="2.05"/><circle cx="321.9" cy="164.6" r="2.05"/><circle cx="339.8" cy="164.6" r="2.05"/><circle cx="348.7" cy="164.6" r="2.05"/><circle cx="357.7" cy="164.6" r="2.05"/><circle cx="366.6" cy="164.6" r="2.05"/><circle cx="375.5" cy="164.6" r="2.05"/><circle cx="384.5" cy="164.6" r="2.05"/><circle cx="402.3" cy="164.6" r="2.05"/><circle cx="411.3" cy="164.6" r="2.05"/><circle cx="429.1" cy="164.6" r="2.05"/><circle cx="438.1" cy="164.6" r="2.05"/><circle cx="455.9" cy="164.6" r="2.05"/><circle cx="464.9" cy="164.6" r="2.05"/><circle cx="473.8" cy="164.6" r="2.05"/><circle cx="482.7" cy="164.6" r="2.05"/><circle cx="491.7" cy="164.6" r="2.05"/><circle cx="500.6" cy="164.6" r="2.05"/><circle cx="518.5" cy="164.6" r="2.05"/><circle cx="527.4" cy="164.6" r="2.05"/><circle cx="313.0" cy="173.5" r="2.05"/><circle cx="321.9" cy="173.5" r="2.05"/><circle cx="330.9" cy="173.5" r="2.05"/><circle cx="348.7" cy="173.5" r="2.05"/><circle cx="357.7" cy="173.5" r="2.05"/><circle cx="366.6" cy="173.5" r="2.05"/><circle cx="375.5" cy="173.5" r="2.05"/><circle cx="384.5" cy="173.5" r="2.05"/><circle cx="402.3" cy="173.5" r="2.05"/><circle cx="411.3" cy="173.5" r="2.05"/><circle cx="429.1" cy="173.5" r="2.05"/><circle cx="438.1" cy="173.5" r="2.05"/><circle cx="455.9" cy="173.5" r="2.05"/><circle cx="464.9" cy="173.5" r="2.05"/><circle cx="473.8" cy="173.5" r="2.05"/><circle cx="482.7" cy="173.5" r="2.05"/><circle cx="491.7" cy="173.5" r="2.05"/><circle cx="509.5" cy="173.5" r="2.05"/><circle cx="518.5" cy="173.5" r="2.05"/><circle cx="527.4" cy="173.5" r="2.05"/><circle cx="313.0" cy="182.4" r="2.05"/><circle cx="321.9" cy="182.4" r="2.05"/><circle cx="330.9" cy="182.4" r="2.05"/><circle cx="339.8" cy="182.4" r="2.05"/><circle cx="357.7" cy="182.4" r="2.05"/><circle cx="366.6" cy="182.4" r="2.05"/><circle cx="375.5" cy="182.4" r="2.05"/><circle cx="384.5" cy="182.4" r="2.05"/><circle cx="402.3" cy="182.4" r="2.05"/><circle cx="411.3" cy="182.4" r="2.05"/><circle cx="429.1" cy="182.4" r="2.05"/><circle cx="438.1" cy="182.4" r="2.05"/><circle cx="455.9" cy="182.4" r="2.05"/><circle cx="464.9" cy="182.4" r="2.05"/><circle cx="473.8" cy="182.4" r="2.05"/><circle cx="482.7" cy="182.4" r="2.05"/><circle cx="500.6" cy="182.4" r="2.05"/><circle cx="509.5" cy="182.4" r="2.05"/><circle cx="518.5" cy="182.4" r="2.05"/><circle cx="527.4" cy="182.4" r="2.05"/><circle cx="313.0" cy="191.4" r="2.05"/><circle cx="321.9" cy="191.4" r="2.05"/><circle cx="330.9" cy="191.4" r="2.05"/><circle cx="339.8" cy="191.4" r="2.05"/><circle cx="348.7" cy="191.4" r="2.05"/><circle cx="366.6" cy="191.4" r="2.05"/><circle cx="375.5" cy="191.4" r="2.05"/><circle cx="384.5" cy="191.4" r="2.05"/><circle cx="402.3" cy="191.4" r="2.05"/><circle cx="411.3" cy="191.4" r="2.05"/><circle cx="429.1" cy="191.4" r="2.05"/><circle cx="438.1" cy="191.4" r="2.05"/><circle cx="455.9" cy="191.4" r="2.05"/><circle cx="464.9" cy="191.4" r="2.05"/><circle cx="473.8" cy="191.4" r="2.05"/><circle cx="491.7" cy="191.4" r="2.05"/><circle cx="500.6" cy="191.4" r="2.05"/><circle cx="509.5" cy="191.4" r="2.05"/><circle cx="518.5" cy="191.4" r="2.05"/><circle cx="527.4" cy="191.4" r="2.05"/><circle cx="313.0" cy="200.3" r="2.05"/><circle cx="321.9" cy="200.3" r="2.05"/><circle cx="330.9" cy="200.3" r="2.05"/><circle cx="339.8" cy="200.3" r="2.05"/><circle cx="348.7" cy="200.3" r="2.05"/><circle cx="375.5" cy="200.3" r="2.05"/><circle cx="384.5" cy="200.3" r="2.05"/><circle cx="402.3" cy="200.3" r="2.05"/><circle cx="411.3" cy="200.3" r="2.05"/><circle cx="429.1" cy="200.3" r="2.05"/><circle cx="438.1" cy="200.3" r="2.05"/><circle cx="455.9" cy="200.3" r="2.05"/><circle cx="464.9" cy="200.3" r="2.05"/><circle cx="491.7" cy="200.3" r="2.05"/><circle cx="500.6" cy="200.3" r="2.05"/><circle cx="509.5" cy="200.3" r="2.05"/><circle cx="518.5" cy="200.3" r="2.05"/><circle cx="527.4" cy="200.3" r="2.05"/><circle cx="313.0" cy="209.2" r="2.05"/><circle cx="321.9" cy="209.2" r="2.05"/><circle cx="330.9" cy="209.2" r="2.05"/><circle cx="339.8" cy="209.2" r="2.05"/><circle cx="348.7" cy="209.2" r="2.05"/><circle cx="357.7" cy="209.2" r="2.05"/><circle cx="366.6" cy="209.2" r="2.05"/><circle cx="384.5" cy="209.2" r="2.05"/><circle cx="402.3" cy="209.2" r="2.05"/><circle cx="411.3" cy="209.2" r="2.05"/><circle cx="429.1" cy="209.2" r="2.05"/><circle cx="438.1" cy="209.2" r="2.05"/><circle cx="455.9" cy="209.2" r="2.05"/><circle cx="473.8" cy="209.2" r="2.05"/><circle cx="482.7" cy="209.2" r="2.05"/><circle cx="491.7" cy="209.2" r="2.05"/><circle cx="500.6" cy="209.2" r="2.05"/><circle cx="509.5" cy="209.2" r="2.05"/><circle cx="518.5" cy="209.2" r="2.05"/><circle cx="527.4" cy="209.2" r="2.05"/><circle cx="313.0" cy="218.2" r="2.05"/><circle cx="321.9" cy="218.2" r="2.05"/><circle cx="330.9" cy="218.2" r="2.05"/><circle cx="339.8" cy="218.2" r="2.05"/><circle cx="348.7" cy="218.2" r="2.05"/><circle cx="357.7" cy="218.2" r="2.05"/><circle cx="366.6" cy="218.2" r="2.05"/><circle cx="375.5" cy="218.2" r="2.05"/><circle cx="393.4" cy="218.2" r="2.05"/><circle cx="402.3" cy="218.2" r="2.05"/><circle cx="411.3" cy="218.2" r="2.05"/><circle cx="420.2" cy="218.2" r="2.05"/><circle cx="429.1" cy="218.2" r="2.05"/><circle cx="438.1" cy="218.2" r="2.05"/><circle cx="447.0" cy="218.2" r="2.05"/><circle cx="464.9" cy="218.2" r="2.05"/><circle cx="473.8" cy="218.2" r="2.05"/><circle cx="482.7" cy="218.2" r="2.05"/><circle cx="491.7" cy="218.2" r="2.05"/><circle cx="500.6" cy="218.2" r="2.05"/><circle cx="509.5" cy="218.2" r="2.05"/><circle cx="518.5" cy="218.2" r="2.05"/><circle cx="527.4" cy="218.2" r="2.05"/><circle cx="313.0" cy="227.1" r="2.05"/><circle cx="321.9" cy="227.1" r="2.05"/><circle cx="384.5" cy="227.1" r="2.05"/><circle cx="393.4" cy="227.1" r="2.05"/><circle cx="402.3" cy="227.1" r="2.05"/><circle cx="411.3" cy="227.1" r="2.05"/><circle cx="420.2" cy="227.1" r="2.05"/><circle cx="429.1" cy="227.1" r="2.05"/><circle cx="438.1" cy="227.1" r="2.05"/><circle cx="447.0" cy="227.1" r="2.05"/><circle cx="455.9" cy="227.1" r="2.05"/><circle cx="518.5" cy="227.1" r="2.05"/><circle cx="527.4" cy="227.1" r="2.05"/><circle cx="313.0" cy="236.0" r="2.05"/><circle cx="321.9" cy="236.0" r="2.05"/><circle cx="330.9" cy="236.0" r="2.05"/><circle cx="339.8" cy="236.0" r="2.05"/><circle cx="348.7" cy="236.0" r="2.05"/><circle cx="357.7" cy="236.0" r="2.05"/><circle cx="366.6" cy="236.0" r="2.05"/><circle cx="375.5" cy="236.0" r="2.05"/><circle cx="384.5" cy="236.0" r="2.05"/><circle cx="393.4" cy="236.0" r="2.05"/><circle cx="402.3" cy="236.0" r="2.05"/><circle cx="411.3" cy="236.0" r="2.05"/><circle cx="420.2" cy="236.0" r="2.05"/><circle cx="429.1" cy="236.0" r="2.05"/><circle cx="438.1" cy="236.0" r="2.05"/><circle cx="447.0" cy="236.0" r="2.05"/><circle cx="455.9" cy="236.0" r="2.05"/><circle cx="464.9" cy="236.0" r="2.05"/><circle cx="473.8" cy="236.0" r="2.05"/><circle cx="482.7" cy="236.0" r="2.05"/><circle cx="491.7" cy="236.0" r="2.05"/><circle cx="500.6" cy="236.0" r="2.05"/><circle cx="509.5" cy="236.0" r="2.05"/><circle cx="518.5" cy="236.0" r="2.05"/><circle cx="527.4" cy="236.0" r="2.05"/><circle cx="313.0" cy="245.0" r="2.05"/><circle cx="321.9" cy="245.0" r="2.05"/><circle cx="330.9" cy="245.0" r="2.05"/><circle cx="339.8" cy="245.0" r="2.05"/><circle cx="348.7" cy="245.0" r="2.05"/><circle cx="357.7" cy="245.0" r="2.05"/><circle cx="366.6" cy="245.0" r="2.05"/><circle cx="375.5" cy="245.0" r="2.05"/><circle cx="384.5" cy="245.0" r="2.05"/><circle cx="393.4" cy="245.0" r="2.05"/><circle cx="402.3" cy="245.0" r="2.05"/><circle cx="411.3" cy="245.0" r="2.05"/><circle cx="420.2" cy="245.0" r="2.05"/><circle cx="429.1" cy="245.0" r="2.05"/><circle cx="438.1" cy="245.0" r="2.05"/><circle cx="447.0" cy="245.0" r="2.05"/><circle cx="455.9" cy="245.0" r="2.05"/><circle cx="464.9" cy="245.0" r="2.05"/><circle cx="473.8" cy="245.0" r="2.05"/><circle cx="482.7" cy="245.0" r="2.05"/><circle cx="491.7" cy="245.0" r="2.05"/><circle cx="500.6" cy="245.0" r="2.05"/><circle cx="509.5" cy="245.0" r="2.05"/><circle cx="518.5" cy="245.0" r="2.05"/><circle cx="527.4" cy="245.0" r="2.05"/><circle cx="384.5" cy="253.9" r="2.05"/><circle cx="393.4" cy="253.9" r="2.05"/><circle cx="402.3" cy="253.9" r="2.05"/><circle cx="411.3" cy="253.9" r="2.05"/><circle cx="420.2" cy="253.9" r="2.05"/><circle cx="429.1" cy="253.9" r="2.05"/><circle cx="438.1" cy="253.9" r="2.05"/><circle cx="447.0" cy="253.9" r="2.05"/><circle cx="455.9" cy="253.9" r="2.05"/><circle cx="313.0" cy="262.8" r="2.05"/><circle cx="321.9" cy="262.8" r="2.05"/><circle cx="330.9" cy="262.8" r="2.05"/><circle cx="339.8" cy="262.8" r="2.05"/><circle cx="348.7" cy="262.8" r="2.05"/><circle cx="357.7" cy="262.8" r="2.05"/><circle cx="366.6" cy="262.8" r="2.05"/><circle cx="375.5" cy="262.8" r="2.05"/><circle cx="384.5" cy="262.8" r="2.05"/><circle cx="393.4" cy="262.8" r="2.05"/><circle cx="402.3" cy="262.8" r="2.05"/><circle cx="411.3" cy="262.8" r="2.05"/><circle cx="420.2" cy="262.8" r="2.05"/><circle cx="429.1" cy="262.8" r="2.05"/><circle cx="438.1" cy="262.8" r="2.05"/><circle cx="447.0" cy="262.8" r="2.05"/><circle cx="455.9" cy="262.8" r="2.05"/><circle cx="464.9" cy="262.8" r="2.05"/><circle cx="473.8" cy="262.8" r="2.05"/><circle cx="482.7" cy="262.8" r="2.05"/><circle cx="491.7" cy="262.8" r="2.05"/><circle cx="500.6" cy="262.8" r="2.05"/><circle cx="509.5" cy="262.8" r="2.05"/><circle cx="518.5" cy="262.8" r="2.05"/><circle cx="527.4" cy="262.8" r="2.05"/><circle cx="313.0" cy="271.8" r="2.05"/><circle cx="321.9" cy="271.8" r="2.05"/><circle cx="330.9" cy="271.8" r="2.05"/><circle cx="339.8" cy="271.8" r="2.05"/><circle cx="348.7" cy="271.8" r="2.05"/><circle cx="357.7" cy="271.8" r="2.05"/><circle cx="366.6" cy="271.8" r="2.05"/><circle cx="375.5" cy="271.8" r="2.05"/><circle cx="384.5" cy="271.8" r="2.05"/><circle cx="393.4" cy="271.8" r="2.05"/><circle cx="402.3" cy="271.8" r="2.05"/><circle cx="411.3" cy="271.8" r="2.05"/><circle cx="420.2" cy="271.8" r="2.05"/><circle cx="429.1" cy="271.8" r="2.05"/><circle cx="438.1" cy="271.8" r="2.05"/><circle cx="447.0" cy="271.8" r="2.05"/><circle cx="455.9" cy="271.8" r="2.05"/><circle cx="464.9" cy="271.8" r="2.05"/><circle cx="473.8" cy="271.8" r="2.05"/><circle cx="482.7" cy="271.8" r="2.05"/><circle cx="491.7" cy="271.8" r="2.05"/><circle cx="500.6" cy="271.8" r="2.05"/><circle cx="509.5" cy="271.8" r="2.05"/><circle cx="518.5" cy="271.8" r="2.05"/><circle cx="527.4" cy="271.8" r="2.05"/><circle cx="313.0" cy="280.7" r="2.05"/><circle cx="321.9" cy="280.7" r="2.05"/><circle cx="384.5" cy="280.7" r="2.05"/><circle cx="393.4" cy="280.7" r="2.05"/><circle cx="402.3" cy="280.7" r="2.05"/><circle cx="411.3" cy="280.7" r="2.05"/><circle cx="420.2" cy="280.7" r="2.05"/><circle cx="429.1" cy="280.7" r="2.05"/><circle cx="438.1" cy="280.7" r="2.05"/><circle cx="447.0" cy="280.7" r="2.05"/><circle cx="455.9" cy="280.7" r="2.05"/><circle cx="518.5" cy="280.7" r="2.05"/><circle cx="527.4" cy="280.7" r="2.05"/><circle cx="313.0" cy="289.6" r="2.05"/><circle cx="321.9" cy="289.6" r="2.05"/><circle cx="330.9" cy="289.6" r="2.05"/><circle cx="339.8" cy="289.6" r="2.05"/><circle cx="348.7" cy="289.6" r="2.05"/><circle cx="357.7" cy="289.6" r="2.05"/><circle cx="366.6" cy="289.6" r="2.05"/><circle cx="375.5" cy="289.6" r="2.05"/><circle cx="393.4" cy="289.6" r="2.05"/><circle cx="402.3" cy="289.6" r="2.05"/><circle cx="411.3" cy="289.6" r="2.05"/><circle cx="420.2" cy="289.6" r="2.05"/><circle cx="429.1" cy="289.6" r="2.05"/><circle cx="438.1" cy="289.6" r="2.05"/><circle cx="447.0" cy="289.6" r="2.05"/><circle cx="464.9" cy="289.6" r="2.05"/><circle cx="473.8" cy="289.6" r="2.05"/><circle cx="482.7" cy="289.6" r="2.05"/><circle cx="491.7" cy="289.6" r="2.05"/><circle cx="500.6" cy="289.6" r="2.05"/><circle cx="509.5" cy="289.6" r="2.05"/><circle cx="518.5" cy="289.6" r="2.05"/><circle cx="527.4" cy="289.6" r="2.05"/><circle cx="313.0" cy="298.6" r="2.05"/><circle cx="321.9" cy="298.6" r="2.05"/><circle cx="330.9" cy="298.6" r="2.05"/><circle cx="339.8" cy="298.6" r="2.05"/><circle cx="348.7" cy="298.6" r="2.05"/><circle cx="357.7" cy="298.6" r="2.05"/><circle cx="366.6" cy="298.6" r="2.05"/><circle cx="384.5" cy="298.6" r="2.05"/><circle cx="402.3" cy="298.6" r="2.05"/><circle cx="411.3" cy="298.6" r="2.05"/><circle cx="429.1" cy="298.6" r="2.05"/><circle cx="438.1" cy="298.6" r="2.05"/><circle cx="455.9" cy="298.6" r="2.05"/><circle cx="473.8" cy="298.6" r="2.05"/><circle cx="482.7" cy="298.6" r="2.05"/><circle cx="491.7" cy="298.6" r="2.05"/><circle cx="500.6" cy="298.6" r="2.05"/><circle cx="509.5" cy="298.6" r="2.05"/><circle cx="518.5" cy="298.6" r="2.05"/><circle cx="527.4" cy="298.6" r="2.05"/><circle cx="313.0" cy="307.5" r="2.05"/><circle cx="321.9" cy="307.5" r="2.05"/><circle cx="330.9" cy="307.5" r="2.05"/><circle cx="339.8" cy="307.5" r="2.05"/><circle cx="348.7" cy="307.5" r="2.05"/><circle cx="375.5" cy="307.5" r="2.05"/><circle cx="384.5" cy="307.5" r="2.05"/><circle cx="402.3" cy="307.5" r="2.05"/><circle cx="411.3" cy="307.5" r="2.05"/><circle cx="429.1" cy="307.5" r="2.05"/><circle cx="438.1" cy="307.5" r="2.05"/><circle cx="455.9" cy="307.5" r="2.05"/><circle cx="464.9" cy="307.5" r="2.05"/><circle cx="491.7" cy="307.5" r="2.05"/><circle cx="500.6" cy="307.5" r="2.05"/><circle cx="509.5" cy="307.5" r="2.05"/><circle cx="518.5" cy="307.5" r="2.05"/><circle cx="527.4" cy="307.5" r="2.05"/><circle cx="313.0" cy="316.4" r="2.05"/><circle cx="321.9" cy="316.4" r="2.05"/><circle cx="330.9" cy="316.4" r="2.05"/><circle cx="339.8" cy="316.4" r="2.05"/><circle cx="348.7" cy="316.4" r="2.05"/><circle cx="366.6" cy="316.4" r="2.05"/><circle cx="375.5" cy="316.4" r="2.05"/><circle cx="384.5" cy="316.4" r="2.05"/><circle cx="402.3" cy="316.4" r="2.05"/><circle cx="411.3" cy="316.4" r="2.05"/><circle cx="429.1" cy="316.4" r="2.05"/><circle cx="438.1" cy="316.4" r="2.05"/><circle cx="455.9" cy="316.4" r="2.05"/><circle cx="464.9" cy="316.4" r="2.05"/><circle cx="473.8" cy="316.4" r="2.05"/><circle cx="491.7" cy="316.4" r="2.05"/><circle cx="500.6" cy="316.4" r="2.05"/><circle cx="509.5" cy="316.4" r="2.05"/><circle cx="518.5" cy="316.4" r="2.05"/><circle cx="527.4" cy="316.4" r="2.05"/><circle cx="313.0" cy="325.4" r="2.05"/><circle cx="321.9" cy="325.4" r="2.05"/><circle cx="330.9" cy="325.4" r="2.05"/><circle cx="339.8" cy="325.4" r="2.05"/><circle cx="357.7" cy="325.4" r="2.05"/><circle cx="366.6" cy="325.4" r="2.05"/><circle cx="375.5" cy="325.4" r="2.05"/><circle cx="384.5" cy="325.4" r="2.05"/><circle cx="402.3" cy="325.4" r="2.05"/><circle cx="411.3" cy="325.4" r="2.05"/><circle cx="429.1" cy="325.4" r="2.05"/><circle cx="438.1" cy="325.4" r="2.05"/><circle cx="455.9" cy="325.4" r="2.05"/><circle cx="464.9" cy="325.4" r="2.05"/><circle cx="473.8" cy="325.4" r="2.05"/><circle cx="482.7" cy="325.4" r="2.05"/><circle cx="500.6" cy="325.4" r="2.05"/><circle cx="509.5" cy="325.4" r="2.05"/><circle cx="518.5" cy="325.4" r="2.05"/><circle cx="527.4" cy="325.4" r="2.05"/><circle cx="313.0" cy="334.3" r="2.05"/><circle cx="321.9" cy="334.3" r="2.05"/><circle cx="330.9" cy="334.3" r="2.05"/><circle cx="348.7" cy="334.3" r="2.05"/><circle cx="357.7" cy="334.3" r="2.05"/><circle cx="366.6" cy="334.3" r="2.05"/><circle cx="375.5" cy="334.3" r="2.05"/><circle cx="384.5" cy="334.3" r="2.05"/><circle cx="402.3" cy="334.3" r="2.05"/><circle cx="411.3" cy="334.3" r="2.05"/><circle cx="429.1" cy="334.3" r="2.05"/><circle cx="438.1" cy="334.3" r="2.05"/><circle cx="455.9" cy="334.3" r="2.05"/><circle cx="464.9" cy="334.3" r="2.05"/><circle cx="473.8" cy="334.3" r="2.05"/><circle cx="482.7" cy="334.3" r="2.05"/><circle cx="491.7" cy="334.3" r="2.05"/><circle cx="509.5" cy="334.3" r="2.05"/><circle cx="518.5" cy="334.3" r="2.05"/><circle cx="527.4" cy="334.3" r="2.05"/><circle cx="313.0" cy="343.2" r="2.05"/><circle cx="321.9" cy="343.2" r="2.05"/><circle cx="339.8" cy="343.2" r="2.05"/><circle cx="348.7" cy="343.2" r="2.05"/><circle cx="357.7" cy="343.2" r="2.05"/><circle cx="366.6" cy="343.2" r="2.05"/><circle cx="375.5" cy="343.2" r="2.05"/><circle cx="384.5" cy="343.2" r="2.05"/><circle cx="402.3" cy="343.2" r="2.05"/><circle cx="411.3" cy="343.2" r="2.05"/><circle cx="429.1" cy="343.2" r="2.05"/><circle cx="438.1" cy="343.2" r="2.05"/><circle cx="455.9" cy="343.2" r="2.05"/><circle cx="464.9" cy="343.2" r="2.05"/><circle cx="473.8" cy="343.2" r="2.05"/><circle cx="482.7" cy="343.2" r="2.05"/><circle cx="491.7" cy="343.2" r="2.05"/><circle cx="500.6" cy="343.2" r="2.05"/><circle cx="518.5" cy="343.2" r="2.05"/><circle cx="527.4" cy="343.2" r="2.05"/><circle cx="313.0" cy="352.2" r="2.05"/><circle cx="321.9" cy="352.2" r="2.05"/><circle cx="330.9" cy="352.2" r="2.05"/><circle cx="339.8" cy="352.2" r="2.05"/><circle cx="348.7" cy="352.2" r="2.05"/><circle cx="357.7" cy="352.2" r="2.05"/><circle cx="366.6" cy="352.2" r="2.05"/><circle cx="375.5" cy="352.2" r="2.05"/><circle cx="384.5" cy="352.2" r="2.05"/><circle cx="393.4" cy="352.2" r="2.05"/><circle cx="402.3" cy="352.2" r="2.05"/><circle cx="411.3" cy="352.2" r="2.05"/><circle cx="429.1" cy="352.2" r="2.05"/><circle cx="438.1" cy="352.2" r="2.05"/><circle cx="447.0" cy="352.2" r="2.05"/><circle cx="455.9" cy="352.2" r="2.05"/><circle cx="464.9" cy="352.2" r="2.05"/><circle cx="473.8" cy="352.2" r="2.05"/><circle cx="482.7" cy="352.2" r="2.05"/><circle cx="491.7" cy="352.2" r="2.05"/><circle cx="500.6" cy="352.2" r="2.05"/><circle cx="509.5" cy="352.2" r="2.05"/><circle cx="518.5" cy="352.2" r="2.05"/><circle cx="527.4" cy="352.2" r="2.05"/><circle cx="313.0" cy="361.1" r="2.05"/><circle cx="321.9" cy="361.1" r="2.05"/><circle cx="330.9" cy="361.1" r="2.05"/><circle cx="339.8" cy="361.1" r="2.05"/><circle cx="348.7" cy="361.1" r="2.05"/><circle cx="357.7" cy="361.1" r="2.05"/><circle cx="366.6" cy="361.1" r="2.05"/><circle cx="375.5" cy="361.1" r="2.05"/><circle cx="384.5" cy="361.1" r="2.05"/><circle cx="393.4" cy="361.1" r="2.05"/><circle cx="402.3" cy="361.1" r="2.05"/><circle cx="411.3" cy="361.1" r="2.05"/><circle cx="429.1" cy="361.1" r="2.05"/><circle cx="438.1" cy="361.1" r="2.05"/><circle cx="447.0" cy="361.1" r="2.05"/><circle cx="455.9" cy="361.1" r="2.05"/><circle cx="464.9" cy="361.1" r="2.05"/><circle cx="473.8" cy="361.1" r="2.05"/><circle cx="482.7" cy="361.1" r="2.05"/><circle cx="491.7" cy="361.1" r="2.05"/><circle cx="500.6" cy="361.1" r="2.05"/><circle cx="509.5" cy="361.1" r="2.05"/><circle cx="518.5" cy="361.1" r="2.05"/><circle cx="527.4" cy="361.1" r="2.05"/></g><g fill="#98d3b0" stroke="#b2e4c6" stroke-width=".7" transform="translate(0 .4)"><rect x="279.00" y="53.20" width="6.0" height="6.0" rx="1.5"/><rect x="291.40" y="53.20" width="6.0" height="6.0" rx="1.5"/><circle cx="294" cy="71.2" r="5.2"/><rect x="350.1" y="46" width="15.2" height="8.5" rx="1.5"/><rect x="373" y="46" width="15.8" height="8.5" rx="1.5"/><rect x="365.30" y="63.00" width="6.2" height="6.2" rx="1.5"/><rect x="365.30" y="76.60" width="6.2" height="6.2" rx="1.5"/><rect x="377.50" y="63.00" width="6.2" height="6.2" rx="1.5"/><rect x="377.50" y="76.60" width="6.2" height="6.2" rx="1.5"/><rect x="392.40" y="63.10" width="6.2" height="7.0" rx="1.5"/><rect x="392.40" y="75.50" width="6.2" height="7.0" rx="1.5"/><rect x="186.6" y="67.4" width="2.8" height="3.2" rx="1.2"/><rect x="186.6" y="78.6" width="2.8" height="3.2" rx="1.2"/><rect x="186.6" y="89.9" width="2.8" height="3.2" rx="1.2"/><rect x="186.6" y="133.4" width="2.8" height="3.2" rx="1.2"/><rect x="186.6" y="144.2" width="2.8" height="3.2" rx="1.2"/><rect x="186.6" y="156.1" width="2.8" height="3.2" rx="1.2"/><rect x="186.6" y="349.9" width="2.8" height="3.2" rx="1.2"/><rect x="186.6" y="361.1" width="2.8" height="3.2" rx="1.2"/><rect x="186.6" y="372.0" width="2.8" height="3.2" rx="1.2"/><rect x="594.00" y="64.70" width="6.2" height="6.2" rx="1.5"/><rect x="594.00" y="77.40" width="6.2" height="6.2" rx="1.5"/><rect x="608.90" y="64.70" width="6.2" height="6.2" rx="1.5"/><rect x="608.90" y="77.40" width="6.2" height="6.2" rx="1.5"/><rect x="623.30" y="63.90" width="6.8" height="6.8" rx="1.5"/><rect x="623.30" y="77.60" width="6.8" height="6.8" rx="1.5"/><rect x="635.40" y="63.90" width="6.8" height="6.8" rx="1.5"/><rect x="635.40" y="77.60" width="6.8" height="6.8" rx="1.5"/><rect x="592.6" y="95.4" width="12.9" height="13" rx=".6"/><rect x="627.3" y="95.4" width="16" height="13" rx=".6"/><rect x="575.10" y="140.80" width="6.2" height="6.2" rx="1.5"/><rect x="575.10" y="152.90" width="6.2" height="6.2" rx="1.5"/><rect x="588.40" y="140.80" width="6.2" height="6.2" rx="1.5"/><rect x="588.40" y="152.90" width="6.2" height="6.2" rx="1.5"/><rect x="602.20" y="140.80" width="6.2" height="6.2" rx="1.5"/><rect x="602.20" y="152.90" width="6.2" height="6.2" rx="1.5"/><rect x="617.40" y="140.80" width="6.2" height="6.2" rx="1.5"/><rect x="617.40" y="152.90" width="6.2" height="6.2" rx="1.5"/><rect x="634.80" y="139.60" width="8.4" height="7.8" rx="1.5"/><rect x="634.80" y="154.80" width="8.4" height="7.8" rx="1.5"/><rect x="635.30" y="179.20" width="7.4" height="6.4" rx="1.5"/><rect x="635.30" y="191.30" width="7.4" height="6.4" rx="1.5"/><circle cx="611.2" cy="177.3" r="5.1"/><circle cx="581" cy="197.9" r="5.1"/><circle cx="611.2" cy="203.2" r="5.1"/><circle cx="572.6" cy="218.5" r="5.1"/><rect x="547.20" y="230.00" width="6.2" height="6.2" rx="1.5"/><rect x="547.20" y="242.10" width="6.2" height="6.2" rx="1.5"/><rect x="561.00" y="230.00" width="6.2" height="6.2" rx="1.5"/><rect x="561.00" y="242.10" width="6.2" height="6.2" rx="1.5"/><rect x="574.80" y="230.00" width="6.2" height="6.2" rx="1.5"/><rect x="574.80" y="242.10" width="6.2" height="6.2" rx="1.5"/><rect x="590.00" y="230.00" width="6.2" height="6.2" rx="1.5"/><rect x="590.00" y="242.10" width="6.2" height="6.2" rx="1.5"/><rect x="561.00" y="266.80" width="6.2" height="6.2" rx="1.5"/><rect x="561.00" y="279.20" width="6.2" height="6.2" rx="1.5"/><rect x="574.80" y="266.80" width="6.2" height="6.2" rx="1.5"/><rect x="574.80" y="279.20" width="6.2" height="6.2" rx="1.5"/><rect x="588.40" y="266.80" width="6.2" height="6.2" rx="1.5"/><rect x="588.40" y="279.20" width="6.2" height="6.2" rx="1.5"/><rect x="614.80" y="265.40" width="6.2" height="6.2" rx="1.5"/><rect x="614.80" y="278.10" width="6.2" height="6.2" rx="1.5"/><rect x="629.80" y="265.40" width="6.2" height="6.2" rx="1.5"/><rect x="629.80" y="278.10" width="6.2" height="6.2" rx="1.5"/><circle cx="549.2" cy="274.7" r="5.1"/><circle cx="552" cy="300.6" r="5.1"/><circle cx="549.2" cy="317" r="5.1"/><circle cx="581" cy="304.9" r="5.1"/><circle cx="608.6" cy="307.4" r="5.1"/><rect x="565.00" y="321.80" width="6.2" height="6.2" rx="1.5"/><rect x="580.20" y="321.80" width="6.2" height="6.2" rx="1.5"/><rect x="610.30" y="321.80" width="6.2" height="6.2" rx="1.5"/><rect x="624.10" y="321.80" width="6.2" height="6.2" rx="1.5"/><rect x="594.20" y="321.50" width="8.0" height="6.8" rx="0.5"/><circle cx="642.6" cy="324.9" r="3.3"/><rect x="565.00" y="334.40" width="6.2" height="6.2" rx="1.5"/><rect x="580.20" y="334.40" width="6.2" height="6.2" rx="1.5"/><rect x="610.30" y="334.40" width="6.2" height="6.2" rx="1.5"/><rect x="624.10" y="334.40" width="6.2" height="6.2" rx="1.5"/><rect x="594.20" y="334.10" width="8.0" height="6.8" rx="0.5"/><circle cx="642.6" cy="337.5" r="3.3"/><rect x="565.00" y="364.60" width="6.2" height="6.2" rx="1.5"/><rect x="565.00" y="377.00" width="6.2" height="6.2" rx="1.5"/><rect x="593.70" y="364.60" width="6.2" height="6.2" rx="1.5"/><rect x="593.70" y="377.00" width="6.2" height="6.2" rx="1.5"/><circle cx="579.3" cy="400.1" r="5.1"/><circle cx="603.8" cy="400.1" r="5.1"/><rect x="192.60" y="311.90" width="6.2" height="6.2" rx="1.5"/><rect x="204.90" y="311.90" width="6.2" height="6.2" rx="1.5"/><rect x="282.90" y="380.20" width="5.4" height="5.4" rx="1.5"/><rect x="282.90" y="392.90" width="5.4" height="5.4" rx="1.5"/><circle cx="305.4" cy="384.4" r="5.1"/><rect x="296.70" y="395.50" width="6.2" height="6.2" rx="1.5"/><rect x="309.40" y="395.50" width="6.2" height="6.2" rx="1.5"/><rect x="324.30" y="395.50" width="6.2" height="6.2" rx="1.5"/><rect x="336.70" y="395.50" width="6.2" height="6.2" rx="1.5"/><rect x="336.90" y="411.10" width="5.8" height="5.8" rx="1.5"/><rect x="441.1" y="391.1" width="10.1" height="9.9" rx=".8"/><rect x="441" y="411.6" width="10.3" height="6" rx=".8"/></g><g fill="none" stroke="#ff0000" stroke-width="1.5"><circle cx="312.4" cy="147" r="7.5" stroke-width="1.7"/><path d="M312.9 154.4V339.45H186"/></g><circle cx="313" cy="147.2" r="2.2" fill="#ff0000"/></svg>
<svg style="left:0;top:325px" width="190" height="60" viewBox="0 325 190 60"><g fill="none" stroke="#ff0000" stroke-width="1.4"><rect x="14.4" y="332.4" width="45.4" height="14.2"/><path d="M187.5 339.45H62.2"/><path d="M68.2 335.4L62 339.45l6.2 4"/><path d="M37 346.6V358.5H91.6V369"/><path d="M88.2 364.4l3.4 4.8 3.4-4.8"/><rect x="10" y="370.2" width="162.4" height="10.8"/></g></svg>
<div style="left:187.4px;top:413.6px;width:455.6px;height:12.4px;background:#f0f0f0"></div>
<div style="left:187.4px;top:413.6px;width:455.6px;height:1.2px;background:#fcfcfc"></div>
<div style="left:186.4px;top:411.0px;width:1.2px;height:15.0px;background:repeating-linear-gradient(#8a8a8a 0 1px,#e8e8e8 1px 2px)"></div>
<div style="left:277.4px;top:416.0px;width:114.0px;height:11.0px;border:1px solid #fff;border-top-color:#a8a8a8;border-left-color:#a8a8a8;box-sizing:border-box"></div>
<div style="left:392.2px;top:416.0px;width:144.2px;height:11.0px;border:1px solid #fff;border-top-color:#a8a8a8;border-left-color:#a8a8a8;box-sizing:border-box"></div>
<div style="left:537.2px;top:416.0px;width:37.0px;height:11.0px;border:1px solid #fff;border-top-color:#a8a8a8;border-left-color:#a8a8a8;box-sizing:border-box"></div>
<div style="left:575.0px;top:416.0px;width:16.2px;height:11.0px;border:1px solid #fff;border-top-color:#a8a8a8;border-left-color:#a8a8a8;box-sizing:border-box"></div>
<div style="left:592.0px;top:416.0px;width:19.0px;height:11.0px;border:1px solid #fff;border-top-color:#a8a8a8;border-left-color:#a8a8a8;box-sizing:border-box"></div>
<div style="left:611.8px;top:416.0px;width:18.2px;height:11.0px;border:1px solid #fff;border-top-color:#a8a8a8;border-left-color:#a8a8a8;box-sizing:border-box"></div>
<span class="t" style="left:394.3px;top:416.80px;font-size:7.4px;color:#000;transform:scaleX(0.8064);">x :</span>
<span class="t" style="left:407.0px;top:416.80px;font-size:7.4px;color:#000;transform:scaleX(0.9554);">108.86</span>
<span class="t" style="left:433.1px;top:416.80px;font-size:7.4px;color:#000;transform:scaleX(0.8576);">y :</span>
<span class="t" style="left:447.3px;top:416.80px;font-size:7.4px;color:#000;transform:scaleX(0.9676);">32.27</span>
<span class="t" style="left:539.5px;top:416.80px;font-size:7.4px;color:#000;transform:scaleX(0.7300);">MM</span>
<span class="t" style="left:595.5px;top:416.80px;font-size:7.4px;color:#000;transform:scaleX(0.6827);">NUM</span>
<svg style="left:632px;top:416px" width="10" height="10" viewBox="0 0 10 10"><path d="M9 2L2 9M9 5L5 9M9 8l-1 1" stroke="#b0b0b0" stroke-width=".9"/></svg>
<div style="left:640.8px;top:49.2px;width:2.2px;height:376.8px;background:#ababab"></div>
<div style="left:641.1px;top:0.0px;width:1.0px;height:49.2px;background:#fdfdfd"></div>
<div style="left:642.1px;top:0.0px;width:0.9px;height:49.2px;background:#9a9a9a"></div>
<div style="left:0.0px;top:0.0px;width:643.0px;height:0.8px;background:#a6a6a6"></div>
<div style="left:0.0px;top:0.0px;width:1.2px;height:49.4px;background:#8a8a8a"></div>
</div></body></html>
